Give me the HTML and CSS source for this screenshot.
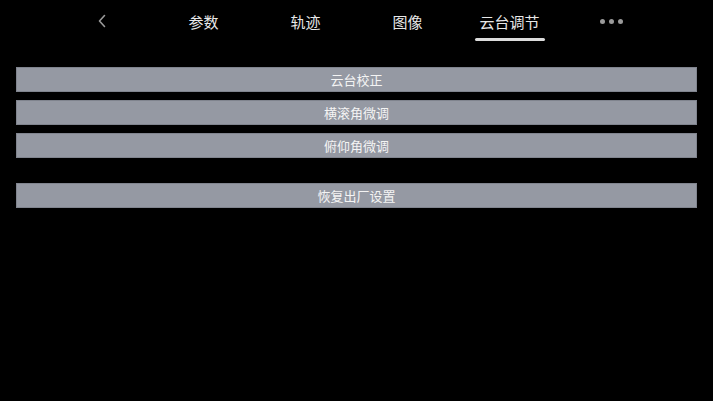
FILE: index.html
```html
<!DOCTYPE html>
<html lang="zh-CN">
<head>
<meta charset="utf-8">
<link rel="stylesheet" href="styles.css">
</head>
<body>
<div class="page">
  <nav class="tabs">
    <div class="tab back">
      <svg width="8" height="14" viewBox="0 0 8 14"><path d="M6.5 1.5 L1.5 7 L6.5 12.5" fill="none" stroke="#9a9a9a" stroke-width="1.6" stroke-linecap="round" stroke-linejoin="round"/></svg>
    </div>
    <div class="tab">参数</div>
    <div class="tab">轨迹</div>
    <div class="tab">图像</div>
    <div class="tab active">云台调节</div>
    <div class="tab more"><span class="dot"></span><span class="dot"></span><span class="dot"></span></div>
  </nav>
  <main class="content">
    <div class="btn">云台校正</div>
    <div class="btn">横滚角微调</div>
    <div class="btn">俯仰角微调</div>
    <div class="btn reset">恢复出厂设置</div>
  </main>
</div>
</body>
</html>
```

FILE: styles.css
```css
html, body {
  margin: 0;
  padding: 0;
  background: #000;
}
body {
  width: 713px;
  height: 401px;
  overflow: hidden;
  font-family: "Noto Sans CJK SC", "Noto Sans", sans-serif;
}
.page {
  display: flex;
  flex-direction: column;
}
.tabs {
  display: flex;
  justify-content: center;
  height: 42px;
}
.tab {
  position: relative;
  width: 102px;
  display: flex;
  align-items: center;
  justify-content: center;
  height: 42px;
  padding-bottom: 0;
  color: #e8e8e8;
  font-size: 15px;
  box-sizing: border-box;
  line-height: 1;
}
.tab.active::after {
  content: "";
  position: absolute;
  left: 16px;
  right: 16px;
  top: 38px;
  height: 2.5px;
  border-radius: 2px;
  background: #dcdcdc;
}
.back svg {
  display: block;
}
.more {
  gap: 4px;
}
.dot {
  width: 5px;
  height: 5px;
  border-radius: 50%;
  background: #9a9a9a;
}
.content {
  display: flex;
  flex-direction: column;
  gap: 8px;
  padding: 25px 16px 0 16px;
}
.btn {
  height: 25px;
  box-sizing: border-box;
  background: #9599a3;
  border: 1px solid #80848e;
  color: #f4f4f4;
  font-size: 13px;
  display: flex;
  align-items: center;
  justify-content: center;
  line-height: 1;
}
.reset {
  margin-top: 17px;
}
```
